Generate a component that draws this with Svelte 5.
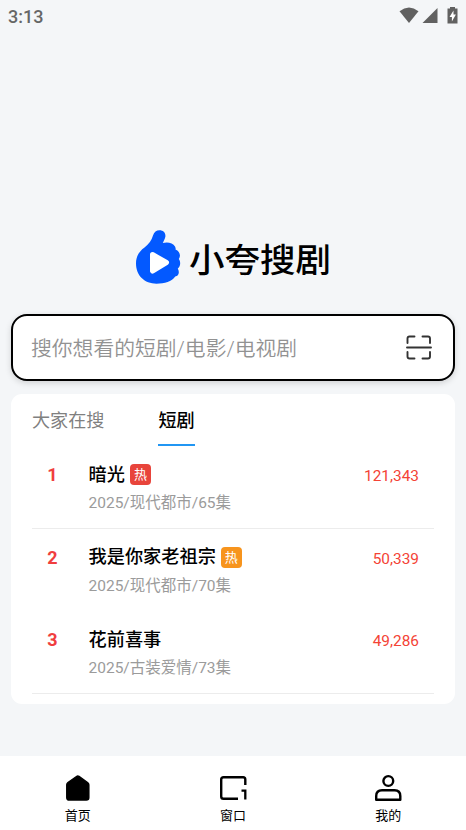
<script>
  let activeTab = $state('short');
  let activeNav = $state('home');

  const tabs = [
    { id: 'all', label: '大家在搜' },
    { id: 'short', label: '短剧' }
  ];

  const dramas = [
    { rank: 1, title: '暗光', info: '2025/现代都市/65集', count: '121,343', hot: 'red', line: true },
    { rank: 2, title: '我是你家老祖宗', info: '2025/现代都市/70集', count: '50,339', hot: 'orange', line: false },
    { rank: 3, title: '花前喜事', info: '2025/古装爱情/73集', count: '49,286', hot: '', line: true }
  ];

  const navs = [
    { id: 'home', label: '首页' },
    { id: 'window', label: '窗口' },
    { id: 'mine', label: '我的' }
  ];
</script>

<div class="page">
  <header class="status">
    <span>3:13</span>
    <svg width="60" height="18" viewBox="0 0 60 18" fill="#616161">
      <path d="M.5 4.2Q10 -3 19.500 4.200L10 16Z" />
      <path d="M38.500 1V16H23.500Z" />
      <path d="M51 0h5v1.500h2.500v15h-10v-15H51Z" />
      <path d="M54.500 3.500 50.500 10h2.400v4.500l4-7h-2.400Z" fill="#fff" />
    </svg>
  </header>

  <div class="brand">
    <svg width="46" height="56" viewBox="0 0 46 56">
      <path
        d="M18 6.500C19 3 21.500 1.200 24.500 1.200C28.500 1.200 31 4 30.300 8C29.700 10.500 28.500 12.300 27.800 14C32 12.800 38 13.500 40 17.500Q41 19.300 40.500 20.500C44.500 22 46.300 26.500 43.800 30C46 33 45.500 37.500 42.800 39.500C45 43.500 43.500 47 40.200 47.500C37 52.500 29.500 54.700 21.500 54.700C9.500 54.700 1 46.500 1 34.500C1 27.500 4 22.500 9.500 18.500C14 15 16.500 11.500 18 6.500Z"
        fill="#0359ff"
      />
      <path d="M17.500 25.500 31.500 33.500 17.500 42Z" fill="#fff" stroke="#fff" stroke-width="5" stroke-linejoin="round" />
    </svg>
    <h1>小夸搜剧</h1>
  </div>

  <div class="search">
    <input type="text" placeholder="搜你想看的短剧/电影/电视剧" />
    <svg width="26" height="26" viewBox="0 0 26 26" fill="none" stroke="#333" stroke-width="1.900" stroke-linecap="round">
      <path d="M1.500 8V3.500Q1.500 1.500 3.500 1.500H8.500M16.500 1.500H22Q24 1.500 24 3.500V8M24 17V21.500Q24 23.500 22 23.500H16.500M8.500 23.500H3.500Q1.500 23.500 1.500 21.500V17M1 12.500H25" />
    </svg>
  </div>

  <section class="card">
    <div class="tabs">
      {#each tabs as tab}
        <button class="tab" class:active={activeTab === tab.id} onclick={() => (activeTab = tab.id)}>{tab.label}</button>
      {/each}
    </div>
    <ul>
      {#each dramas as drama}
        <li class:line={drama.line}>
          <b class="rank">{drama.rank}</b>
          <div class="detail">
            <div class="title">
              <span>{drama.title}</span>
              {#if drama.hot}
                <span class="hot {drama.hot}">热</span>
              {/if}
            </div>
            <p>{drama.info}</p>
          </div>
          <span class="count">{drama.count}</span>
        </li>
      {/each}
    </ul>
  </section>

  <nav>
    {#each navs as nav}
      <button onclick={() => (activeNav = nav.id)}>
        <svg width="28" height="28" viewBox="0 0 28 28" fill="none" stroke="#000" stroke-width="2.400">
          {#if nav.id === 'home'}
            <path d="M12.500 2.500Q13.700 1.700 15 2.500L23.500 8.500Q24.800 9.500 24.800 10.700V23.500Q24.800 26 22.300 26H5.300Q2.800 26 2.800 23.500V10.700Q2.800 9.500 4 8.500Z" fill="#000" stroke-width="1.500" />
          {:else if nav.id === 'window'}
            <path d="M26.300 11V5.500Q26.300 3.200 24.200 3.200H4.500Q2.200 3.200 2.200 5.500V22.500Q2.200 24.800 4.500 24.800H19" />
            <path d="M22.500 16.700H26.300V25.500" stroke-width="2.300" />
          {:else}
            <circle cx="14.300" cy="7" r="4.900" />
            <path d="M2.200 25.800V22Q2.200 16.200 8 16.200H20.500Q26.300 16.200 26.300 22V25.800Z" stroke-linejoin="round" />
          {/if}
        </svg>
        <span>{nav.label}</span>
      </button>
    {/each}
  </nav>
</div>

<style>
  :global(body) {
    margin: 0;
    background: #f4f6f8;
  }

  .page {
    display: flex;
    flex-direction: column;
    box-sizing: border-box;
    width: 466px;
    height: 830px;
    overflow: hidden;
    background: #f4f6f8;
    color: #000;
    font-family: Roboto, "Noto Sans CJK SC", sans-serif;
  }

  button {
    border: none;
    background: none;
    padding: 0;
    color: inherit;
    font: inherit;
    cursor: pointer;
  }

  .status {
    display: flex;
    align-items: center;
    justify-content: space-between;
    height: 32px;
    padding: 0 7px 0 8px;
    color: #666;
    font-size: 18px;
    font-weight: 500;
  }

  .status svg {
    margin-bottom: 1px;
  }

  .brand {
    display: flex;
    align-items: center;
    height: 56px;
    margin: 197px 0 0 135px;
  }

  h1 {
    margin: 8px 0 0 8px;
    font-size: 35.5px;
    font-weight: 500;
    line-height: 56px;
    transform: scaleY(0.92);
  }

  .search {
    display: flex;
    align-items: center;
    box-sizing: border-box;
    height: 67px;
    margin: 29px 11px 0;
    padding: 0 21px 0 18px;
    border: 2px solid #000;
    border-radius: 16px;
    background: #fff;
    box-shadow: 0 2px 6px rgba(0, 0, 0, 0.15);
  }

  input {
    flex: 1;
    min-width: 0;
    padding: 2px 0 0;
    border: none;
    outline: none;
    background: none;
    font-family: inherit;
    font-size: 20.8px;
    font-weight: 350;
  }

  input::placeholder {
    color: #929292;
  }

  .card {
    box-sizing: border-box;
    height: 310px;
    margin: 13px 11px 0;
    padding: 0 21px;
    border-radius: 11px;
    background: #fff;
  }

  .tabs {
    display: flex;
    gap: 54px;
    height: 52px;
  }

  .tab {
    box-sizing: border-box;
    padding-top: 4px;
    border-bottom: 2px solid transparent;
    color: #808080;
    font-size: 18.1px;
    line-height: 46px;
  }

  .tab.active {
    border-color: #2196f3;
    color: #000;
    font-weight: 500;
  }

  ul {
    margin: 0;
    padding: 0;
    list-style: none;
  }

  li {
    display: flex;
    box-sizing: border-box;
    height: 82.5px;
    padding: 17px 15px 0 0;
    border-bottom: 1px solid transparent;
  }

  li.line {
    border-color: #ececec;
  }

  .rank {
    width: 41px;
    padding-right: 15.5px;
    box-sizing: border-box;
    color: #f03e3e;
    font-size: 18px;
    line-height: 24px;
    text-align: right;
  }

  .detail {
    flex: 1;
    margin-left: 15.5px;
  }

  .title {
    display: flex;
    align-items: center;
    gap: 5px;
    height: 23px;
    font-size: 18.2px;
    font-weight: 500;
    line-height: 24px;
  }

  .hot {
    width: 21px;
    height: 21px;
    border-radius: 4px;
    color: #fff;
    font-size: 13px;
    font-weight: 400;
    line-height: 21px;
    text-align: center;
  }

  .red {
    background: #e8443b;
  }

  .orange {
    background: #f7941d;
  }

  p {
    margin: 5px 0 0;
    color: #9b9b9b;
    font-size: 15.5px;
    line-height: 24px;
  }

  .count {
    color: #f44336;
    font-size: 15.4px;
    line-height: 26px;
  }

  nav {
    display: flex;
    height: 74px;
    margin-top: auto;
    background: #fff;
  }

  nav button {
    display: flex;
    flex: 1;
    flex-direction: column;
    align-items: center;
    padding-top: 18px;
    font-size: 13px;
    line-height: 18px;
  }

  nav span {
    margin-top: 5px;
  }
</style>
